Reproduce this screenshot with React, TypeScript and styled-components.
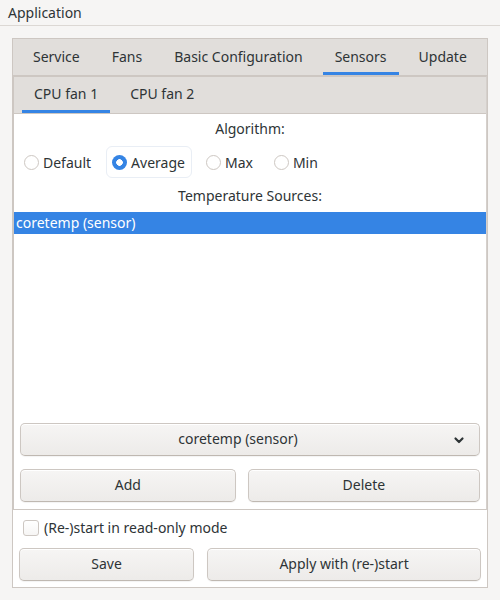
import { FC, useState } from 'react';
import styled, { createGlobalStyle } from 'styled-components';

const GlobalStyle = createGlobalStyle`
    html, body {
        margin: 0;
        padding: 0;
        background: #f6f5f4;
    }
    body {
        font-family: 'Noto Sans', 'DejaVu Sans', sans-serif;
        font-size: 14px;
        color: #2e3436;
    }
    * {
        box-sizing: border-box;
    }
`;

const OUTER_TABS = ['Service', 'Fans', 'Basic Configuration', 'Sensors', 'Update'];
const INNER_TABS = ['CPU fan 1', 'CPU fan 2'];
const ALGORITHMS = ['Default', 'Average', 'Max', 'Min'];

const App = () => {
    const [outerTab, setOuterTab] = useState('Sensors');
    const [innerTab, setInnerTab] = useState('CPU fan 1');
    const [algorithm, setAlgorithm] = useState('Average');
    const [readOnly, setReadOnly] = useState(false);

    return (
        <Window>
            <GlobalStyle />
            <HeaderBar>Application</HeaderBar>
            <Body>
                <Notebook>
                    <TabBar>
                        {OUTER_TABS.map((t) => (
                            <Tab key={t} $active={t === outerTab} onClick={() => setOuterTab(t)}>
                                {t}
                            </Tab>
                        ))}
                    </TabBar>
                    <Page>
                        <InnerNotebook>
                            <TabBar>
                                {INNER_TABS.map((t) => (
                                    <Tab key={t} $active={t === innerTab} $lift={3} onClick={() => setInnerTab(t)}>
                                        {t}
                                    </Tab>
                                ))}
                            </TabBar>
                            <SensorPage>
                                <Caption $height={30}>Algorithm:</Caption>
                                <RadioRow>
                                    {ALGORITHMS.map((a) => (
                                        <RadioOption key={a} label={a} checked={a === algorithm} onSelect={() => setAlgorithm(a)} />
                                    ))}
                                </RadioRow>
                                <Caption $height={32}>Temperature Sources:</Caption>
                                <SourceList>
                                    <SourceRow $selected>coretemp (sensor)</SourceRow>
                                </SourceList>
                                <Controls>
                                    <ComboBox type='button'>
                                        <ComboText>coretemp (sensor)</ComboText>
                                        <Chevron viewBox='0 0 16 16'>
                                            <path d='M4.5 6.5l3.5 3.5 3.5-3.5' fill='none' stroke='#2e3436' strokeWidth='2.2' strokeLinecap='round' strokeLinejoin='round' />
                                        </Chevron>
                                    </ComboBox>
                                    <ButtonRow $gap={12}>
                                        <Button type='button'>Add</Button>
                                        <Button type='button'>Delete</Button>
                                    </ButtonRow>
                                </Controls>
                            </SensorPage>
                        </InnerNotebook>
                        <Footer>
                            <CheckRow onClick={() => setReadOnly(!readOnly)}>
                                <CheckBox $checked={readOnly} />
                                (Re-)start in read-only mode
                            </CheckRow>
                            <ButtonRow $gap={13}>
                                <Button type='button'>Save</Button>
                                <Button type='button'>Apply with (re-)start</Button>
                            </ButtonRow>
                        </Footer>
                    </Page>
                </Notebook>
            </Body>
        </Window>
    );
};

export default App;

const Window = styled.div`
    width: 500px;
    height: 600px;
    display: flex;
    flex-direction: column;
    background: #f6f5f4;
`;

const HeaderBar = styled.div`
    height: 26px;
    padding: 0 8px;
    line-height: 25px;
    border-bottom: 1px solid #dcd8d4;
`;

const Body = styled.div`
    flex: 1;
    display: flex;
    padding: 12px;
    min-height: 0;
`;

const Notebook = styled.div`
    flex: 1;
    display: flex;
    flex-direction: column;
    border: 1px solid #cdc7c2;
`;

const TabBar = styled.div`
    height: 37px;
    flex: none;
    display: flex;
    gap: 8px;
    padding: 0 8px;
    background: #e1dedb;
    border-bottom: 1px solid #cdc7c2;
`;

const Tab = styled.div<{ $active?: boolean; $lift?: number }>`
    display: flex;
    align-items: center;
    padding: 0 12px ${(p) => p.$lift ?? 2}px;
    white-space: nowrap;
    cursor: pointer;
    box-shadow: ${(p) => (p.$active ? 'inset 0 -3px 0 #3584e4' : 'none')};
`;

const Page = styled.div`
    flex: 1;
    display: flex;
    flex-direction: column;
    background: #ffffff;
`;

const InnerNotebook = styled.div`
    flex: 1;
    display: flex;
    flex-direction: column;
    border: 1px solid #cdc7c2;
    border-right-color: #d5d0cc;
`;

const SensorPage = styled.div`
    flex: 1;
    display: flex;
    flex-direction: column;
    background: #ffffff;
`;

const Caption = styled.div<{ $height: number }>`
    height: ${(p) => p.$height}px;
    display: flex;
    align-items: center;
    justify-content: center;
    padding-bottom: 2px;
`;

const RadioRow = styled.div`
    display: flex;
    gap: 8px;
    padding: 0 4px;
    height: 36px;
    align-items: center;
`;

// ---------------------------------------------------------------- //

interface IRadioOptionProps {
    label: string;
    checked: boolean;
    onSelect: () => void;
}

const RadioOption: FC<IRadioOptionProps> = (props) => {
    return (
        <RadioLabel $focused={props.checked} onClick={props.onSelect}>
            <RadioDot $checked={props.checked} />
            {props.label}
        </RadioLabel>
    );
};

const RadioLabel = styled.div<{ $focused?: boolean }>`
    display: flex;
    align-items: center;
    gap: 4px;
    height: 32px;
    padding: 0 6px 0 5px;
    border-radius: 6px;
    border: 1px solid ${(p) => (p.$focused ? '#e9eef5' : 'transparent')};
    cursor: pointer;
`;

const RadioDot = styled.span<{ $checked?: boolean }>`
    width: 15px;
    height: 15px;
    border-radius: 50%;
    flex: none;
    border: ${(p) => (p.$checked ? 'none' : '1px solid #cdc7c2')};
    background: ${(p) => (p.$checked ? 'radial-gradient(circle, #ffffff 0 3px, #3584e4 3.6px)' : '#ffffff')};
`;

// ---------------------------------------------------------------- //

const SourceList = styled.div`
    flex: 1;
    background: #ffffff;
`;

const SourceRow = styled.div<{ $selected?: boolean }>`
    height: 22px;
    line-height: 21px;
    padding: 0 2px;
    color: ${(p) => (p.$selected ? '#ffffff' : 'inherit')};
    background: ${(p) => (p.$selected ? '#3584e4' : 'transparent')};
`;

const Controls = styled.div`
    display: flex;
    flex-direction: column;
    gap: 13px;
    padding: 6px 6px 7px;
`;

const ButtonRow = styled.div<{ $gap: number }>`
    display: flex;
    gap: ${(p) => p.$gap}px;
`;

const Button = styled.button`
    height: 33px;
    flex: 1 1 auto;
    padding: 0 16px 2px;
    font: inherit;
    color: #2e3436;
    border: 1px solid #cdc7c2;
    border-bottom-color: #bfb8b1;
    border-radius: 5px;
    background: linear-gradient(to bottom, #f6f5f4, #edebe9);
    box-shadow: inset 0 1px #ffffff, 0 1px 1px rgba(0, 0, 0, 0.05);
    cursor: pointer;
`;

const ComboBox = styled(Button)`
    flex: none;
    display: flex;
    align-items: center;
    padding: 0 8px 2px;
`;

const ComboText = styled.span`
    flex: 1;
    text-align: center;
    padding-left: 2px;
`;

const Chevron = styled.svg`
    width: 16px;
    height: 16px;
    margin-left: 6px;
    margin-right: 4px;
    margin-top: 2px;
`;

// ---------------------------------------------------------------- //

const Footer = styled.div`
    display: flex;
    flex-direction: column;
    gap: 6px;
    padding: 6px;
`;

const CheckRow = styled.div`
    height: 26px;
    display: flex;
    align-items: center;
    gap: 5px;
    padding: 0 0 3px 4px;
    cursor: pointer;
`;

const CheckBox = styled.span<{ $checked?: boolean }>`
    width: 16px;
    height: 16px;
    border-radius: 3px;
    border: 1px solid #cdc7c2;
    background: ${(p) => (p.$checked ? '#3584e4' : 'linear-gradient(to bottom, #ffffff, #f6f5f4)')};
`;
